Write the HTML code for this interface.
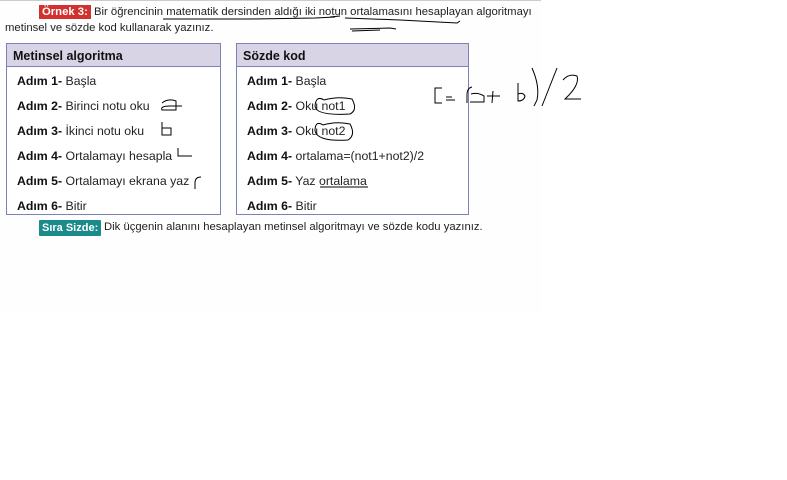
<!DOCTYPE html>
<html><head><meta charset="utf-8"><style>
body{margin:0;width:787px;height:480px;background:#fff;font-family:"Liberation Sans","DejaVu Sans",sans-serif;color:#222;position:relative;overflow:hidden}
.bg{position:absolute;left:0;top:0;width:541px;height:310px;background:#fefefe;border-top:1px solid #ccc}
.t{position:absolute;font-size:11.3px;white-space:nowrap}
.badge{display:inline-block;background:#d2322d;color:#fff;font-weight:bold;padding:0 3px;line-height:14px}
.box{position:absolute;top:43px;height:170px;border:1px solid #7a82b8;background:#fff}
.hd{height:22px;background:#d8d4e6;border-bottom:1px solid #7a82b8;font-weight:bold;font-size:12.5px;line-height:24px;padding-left:6px;color:#111}
.r{position:absolute;left:10px;font-size:12.3px;white-space:nowrap}
.r b{color:#111}
.sira{position:absolute;left:39px;top:220px;background:#1a8a8a;color:#fff;font-weight:bold;font-size:11px;padding:1px 3px;line-height:14px;border-radius:1px}
</style></head><body>
<div class="bg"></div>
<div class="t" style="left:39px;top:5px"><span class="badge">Örnek 3:</span> Bir öğrencinin matematik dersinden aldığı iki notun ortalamasını hesaplayan algoritmayı</div>
<div class="t" style="left:5px;top:22px">metinsel ve sözde kod kullanarak yazınız.</div>
<div class="box" style="left:6px;width:213px"><div class="hd">Metinsel algoritma</div>
<div class="r" style="top:30px"><b>Adım 1-</b> Başla</div>
<div class="r" style="top:55px"><b>Adım 2-</b> Birinci notu oku</div>
<div class="r" style="top:80px"><b>Adım 3-</b> İkinci notu oku</div>
<div class="r" style="top:105px"><b>Adım 4-</b> Ortalamayı hesapla</div>
<div class="r" style="top:130px"><b>Adım 5-</b> Ortalamayı ekrana yaz</div>
<div class="r" style="top:155px"><b>Adım 6-</b> Bitir</div>
</div>
<div class="box" style="left:236px;width:231px"><div class="hd">Sözde kod</div>
<div class="r" style="top:30px"><b>Adım 1-</b> Başla</div>
<div class="r" style="top:55px"><b>Adım 2-</b> Oku not1</div>
<div class="r" style="top:80px"><b>Adım 3-</b> Oku not2</div>
<div class="r" style="top:105px"><b>Adım 4-</b> ortalama=(not1+not2)/2</div>
<div class="r" style="top:130px"><b>Adım 5-</b> Yaz ortalama</div>
<div class="r" style="top:155px"><b>Adım 6-</b> Bitir</div>
</div>
<div class="sira">Sıra Sizde:</div>
<div class="t" style="left:104px;top:221px">Dik üçgenin alanını hesaplayan metinsel algoritmayı ve sözde kodu yazınız.</div>
<svg width="787" height="480" style="position:absolute;left:0;top:0" fill="none" stroke="#000" stroke-width="1">
<path d="M163 19 L250 19 L315 18 L335 17"/>
<path d="M330 17 L340 16"/>
<path d="M345 18 L400 20 L457 23 L460 21"/>
<path d="M350 29 L390 28 L396 29"/>
<path d="M352 31 L380 30"/>
<path d="M162 103 Q168 98 176 101 L176 110 L162 110 Q160 106 170 106 L182 106"/>
<path d="M162 122 L162 135 L171 135 L171 128 L162 128"/>
<path d="M178 148 L178 156 L192 156"/>
<path d="M201 177 Q195 177 195 183 L195 189"/>
<path d="M324 100 Q316 95 315 106 Q316 116 350 114 Q358 110 352 99 Q338 96 324 100"/>
<path d="M323 125 Q315 120 315 131 Q318 142 348 140 Q356 135 350 124 Q336 121 323 125"/>
<path d="M320 187 L368 187"/>
<path d="M442 88 L435 88 L435 103 L442 103"/>
<path d="M446 97 L452 97 M446 100 L455 100"/>
<path d="M472 87 Q467 88 467 95 L467 103"/>
<path d="M471 94 Q478 92 484 96 L484 102 L470 102"/>
<path d="M487 96 L500 96 M493 91 L492 103"/>
<path d="M518 83 L518 101 Q524 101 525 96 Q523 92 518 94"/>
<path d="M532 68 Q540 86 537 100 L534 106"/>
<path d="M542 106 L557 68"/>
<path d="M563 80 Q569 73 577 76 Q580 85 565 99 L581 99"/>
</svg>
</body></html>
